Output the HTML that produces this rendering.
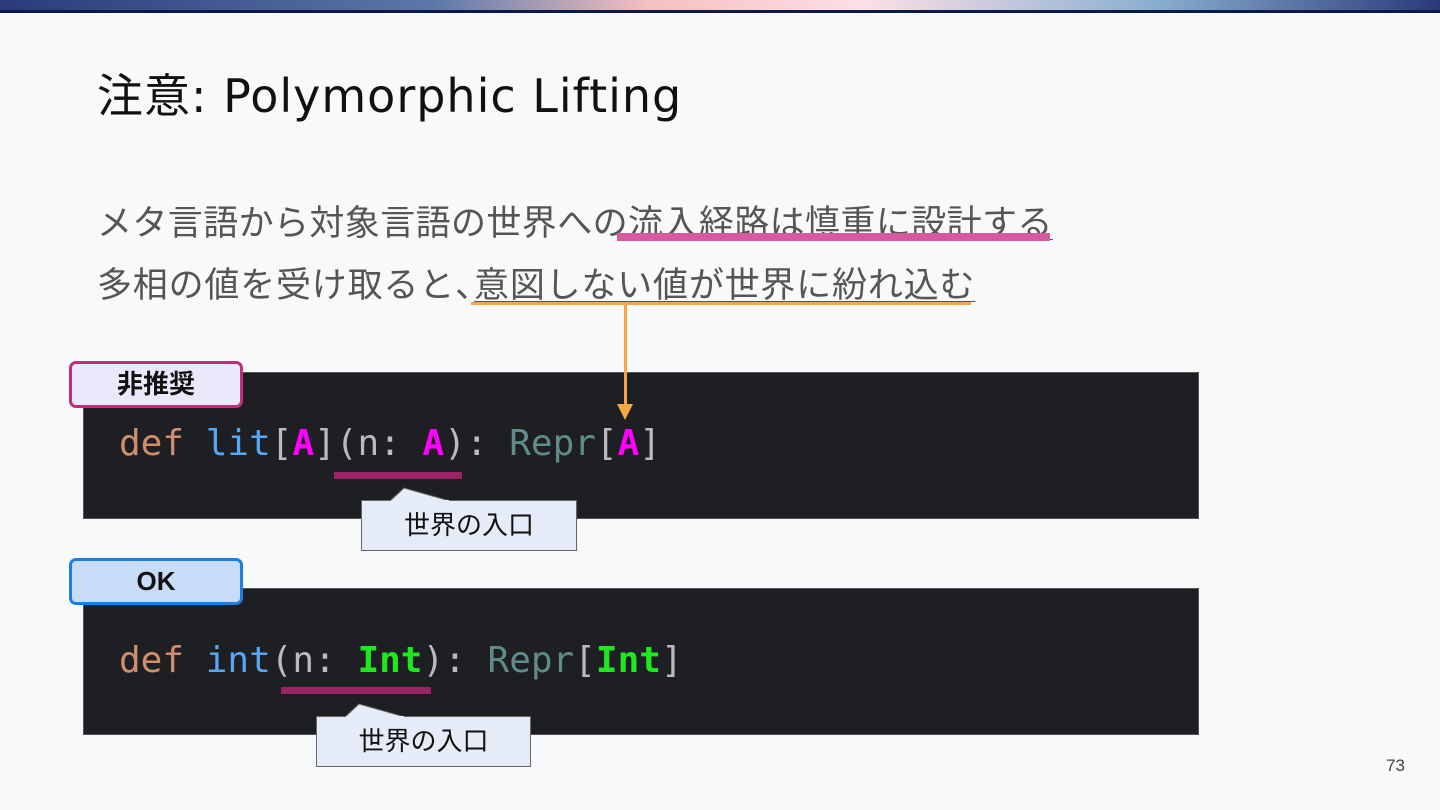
<!DOCTYPE html>
<html><head><meta charset="utf-8"><style>
body{margin:0;width:1440px;height:810px;background:#f8f9fb;position:relative;overflow:hidden;font-family:"Liberation Sans","Noto Sans CJK JP",sans-serif}
.top{position:absolute;left:0;top:0;width:1440px;height:10px;background:linear-gradient(90deg,#2a3a7a 0%,#5a78a8 30%,#f4c0c0 45%,#fce0e8 60%,#8ab0d0 80%,#2a3a7a 100%)}
.top2{position:absolute;left:0;top:10px;width:1440px;height:3px;background:#0e1a4a}
.t{position:absolute;white-space:nowrap}
.code{position:absolute;left:83px;width:1114px;background:#1e1f22;border:1px solid #555}
.mono{font-family:"DejaVu Sans Mono","Liberation Mono",monospace;font-size:36px;position:absolute;left:119px;white-space:pre;color:#bbb}
.tag{position:absolute;left:69px;width:174px;height:47px;border-radius:7px;box-sizing:border-box;font-size:26px;font-weight:bold;text-align:center;line-height:41px;color:#111}
.call{position:absolute;background:#e6ecf7;border:1px solid #666;font-size:26px;text-align:center;line-height:48px;height:51px;box-sizing:border-box;color:#111}
u{text-decoration-thickness:1px;text-underline-offset:4px}
</style></head><body>
<div class="top"></div><div class="top2"></div>
<div class="t" style="left:97px;top:60px;font-size:46px;color:#111;font-family:'DejaVu Sans','Noto Sans CJK JP',sans-serif;letter-spacing:1px">注意: Polymorphic Lifting</div>
<div class="t" style="left:97px;top:195px;font-size:35px;color:#555;letter-spacing:0.4px">メタ言語から対象言語の世界への<u>流入経路は慎重に設計する</u></div>
<div style="position:absolute;left:617px;top:233px;width:433px;height:8px;background:#d65a9e"></div>
<div class="t" style="left:97px;top:257px;font-size:35px;color:#555;letter-spacing:0.8px">多相の値を受け取ると<span style="letter-spacing:-16px">、</span><u>意図しない値が世界に紛れ込む</u></div>
<div style="position:absolute;left:471px;top:302px;width:500px;height:3px;background:#f5a742"></div>

<div class="code" style="top:372px;height:145px"></div>
<div class="code" style="top:588px;height:145px"></div>

<div style="position:absolute;left:624px;top:304px;width:3px;height:104px;background:#f5a742"></div>
<div style="position:absolute;left:617px;top:404px;width:0;height:0;border-left:8px solid transparent;border-right:8px solid transparent;border-top:16px solid #f5a742"></div>

<div class="tag" style="top:361px;background:#ece8fb;border:3px solid #c0307a">非推奨</div>
<div class="tag" style="top:558px;background:#c7dcf7;border:3px solid #1a7fe0">OK</div>

<div class="mono" style="top:423px"><span style="color:#cf8e6d">def</span> <span style="color:#56a8f5">lit</span>[<b style="color:#f0f">A</b>](n: <b style="color:#f0f">A</b>): <span style="color:#5f8c8a">Repr</span>[<b style="color:#f0f">A</b>]</div>
<div class="mono" style="top:640px"><span style="color:#cf8e6d">def</span> <span style="color:#56a8f5">int</span>(n: <b style="color:#1ee81e">Int</b>): <span style="color:#5f8c8a">Repr</span>[<b style="color:#1ee81e">Int</b>]</div>

<div style="position:absolute;left:334px;top:472px;width:128px;height:7px;background:#9c2366"></div>
<div style="position:absolute;left:281px;top:687px;width:150px;height:7px;background:#9c2366"></div>

<svg style="position:absolute;left:0;top:0" width="1440" height="810">
<polygon points="390,501 404,488 450,501" fill="#e6ecf7" stroke="#666"/>
<polygon points="345,717 359,704 405,717" fill="#e6ecf7" stroke="#666"/>
</svg>
<div class="call" style="left:361px;top:500px;width:216px">世界の入口</div>
<div class="call" style="left:316px;top:716px;width:215px">世界の入口</div>
<div style="position:absolute;left:391px;top:500px;width:58px;height:2px;background:#e6ecf7"></div>
<div style="position:absolute;left:346px;top:716px;width:58px;height:2px;background:#e6ecf7"></div>

<div class="t" style="left:1386px;top:756px;font-size:17px;color:#444">73</div>
</body></html>
